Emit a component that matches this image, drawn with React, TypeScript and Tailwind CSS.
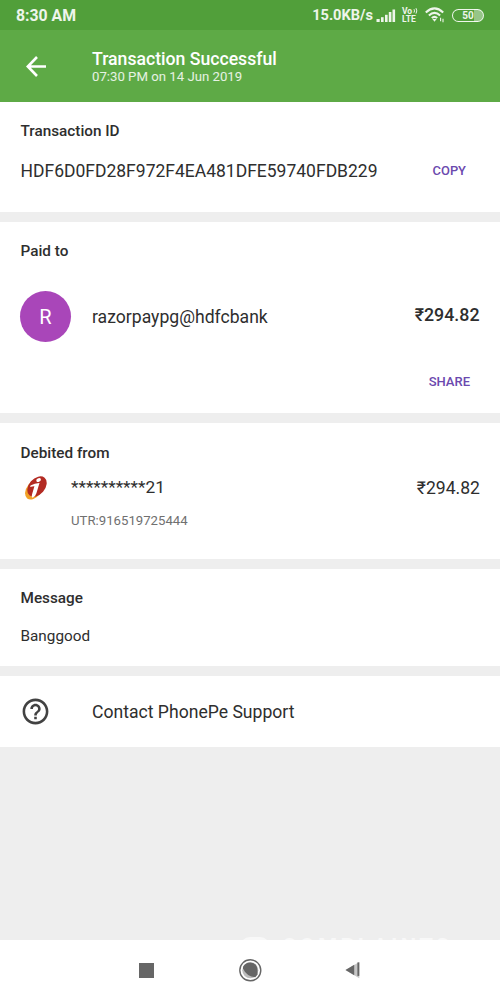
import type { ReactNode } from "react";

const SignalIcon = () => (
  <svg width="20" height="15" viewBox="0 0 20 15" fill="currentColor">
    <rect x="0.5" y="11" width="3.2" height="3" />
    <rect x="5" y="9.2" width="2.6" height="4.8" />
    <rect x="9" y="6.8" width="2.6" height="7.2" />
    <rect x="12.8" y="4" width="2.6" height="10" />
    <rect x="16.5" y="1.5" width="2.6" height="12.5" />
  </svg>
);

const VolteIcon = () => (
  <div className="relative flex w-4 flex-col text-[8.5px] leading-[8px] font-bold">
    <span>Vo</span>
    <span>LTE</span>
    <svg
      className="absolute top-0 left-[11px]"
      width="6"
      height="8"
      viewBox="0 0 6 8"
      fill="none"
      stroke="currentColor"
    >
      <path d="M1 2.2q1 1.6 0 3.4M3 1.2q1.6 2.6 0 5.4" />
    </svg>
  </div>
);

const WifiIcon = () => (
  <svg width="20" height="16" viewBox="0 0 20 16" fill="none" stroke="currentColor">
    <path d="M0.8 5.4Q9.5 -2.6 18.2 5.4" strokeWidth="2.1" />
    <path d="M3.9 8.4Q9.5 3.2 15.1 8.4" strokeWidth="2.1" />
    <path d="M6.8 11.1Q9.5 8.6 12.2 11.1" strokeWidth="2" />
    <path d="M7.4 12h4.2L9.5 14.8z" fill="currentColor" stroke="none" />
    <path d="M15.6 10.8v3.4M18 11.8v3.4" strokeWidth="1.1" />
  </svg>
);

const BankLogo = () => (
  <svg width="24" height="26" viewBox="0 0 24 26">
    <ellipse cx="10.3" cy="14.3" rx="11.6" ry="7.4" transform="rotate(-52 10.3 14.3)" fill="#f2a127" />
    <ellipse cx="13" cy="11.6" rx="11.6" ry="8" transform="rotate(-49 13 11.6)" fill="#b32b23" />
    <ellipse cx="14.6" cy="5" rx="2.5" ry="1.8" transform="rotate(-30 14.6 5)" fill="#fff" />
    <path d="M6.5 10.6Q11 8 15.5 8.1L12.4 18.3Q11.6 21.5 8.6 22.8Q7.2 22 8 19.4L10.4 11.2Q9 11 6.2 12Z" fill="#fff" />
  </svg>
);

const HelpIcon = () => (
  <svg width="31" height="31" viewBox="0 0 24 24" fill="#424242">
    <path d="M11 18h2v-2h-2v2zm1-16C6.48 2 2 6.48 2 12s4.48 10 10 10 10-4.48 10-10S17.52 2 12 2zm0 18c-4.41 0-8-3.59-8-8s3.59-8 8-8 8 3.59 8 8-3.59 8-8 8zm0-14c-2.21 0-4 1.79-4 4h2c0-1.1.9-2 2-2s2 .9 2 2c0 2-3 1.75-3 5h2c0-2.25 3-2.5 3-5 0-2.21-1.79-4-4-4z" />
  </svg>
);

const Section = ({ title, className, children }: { title: string; className: string; children: ReactNode }) => (
  <section className={`bg-white px-5 ${className}`}>
    <h2 className="pl-[0.5px] text-[15.3px] leading-5 font-medium">{title}</h2>
    {children}
  </section>
);

const StatusBar = () => (
  <div className="flex h-[30px] items-center bg-[#519f3a] px-4 pt-px text-white/90">
    <span className="text-[15.8px] font-bold">8:30 AM</span>
    <div className="ml-auto flex items-center">
      <span className="text-[14.6px] font-bold">15.0KB/s</span>
      <div className="ml-[3px]">
        <SignalIcon />
      </div>
      <div className="ml-[6px]">
        <VolteIcon />
      </div>
      <div className="ml-[7px]">
        <WifiIcon />
      </div>
      <div className="ml-[7px] flex h-[13px] w-8 items-center justify-center rounded-full border-[1.5px] border-white/90 bg-linear-to-r from-transparent from-70% to-white/40 to-70% text-[10px] font-bold">
        50
      </div>
    </div>
  </div>
);

const NavBar = () => (
  <nav className="relative flex h-[60px] items-center bg-white text-[#666]">
    <div className="absolute -top-1 left-[240px] flex items-center gap-3 text-[22px] leading-[22px] font-bold text-white/60">
      <div className="h-5 w-[30px] rounded-full border-4 border-white/60" />
      <span className="tracking-[3.2px]">COMPLAINTS</span>
    </div>
    <div className="ml-[139px] size-[15px] bg-[#666]" />
    <svg className="ml-[84px]" width="25" height="25" viewBox="0 0 25 25">
      <circle cx="12.3" cy="12.3" r="10.5" fill="none" stroke="currentColor" strokeWidth="1.4" />
      <circle cx="12.3" cy="12.3" r="8" fill="#bdbdbd" />
      <path d="M5 8.6Q8 4.4 12.4 4.6Q19.2 5.2 19.5 12.3V16.5L17.3 19.3Q8.5 18.5 5 10.5Z" fill="currentColor" />
    </svg>
    <svg className="ml-[82px]" width="16" height="18" viewBox="0 0 16 18">
      <path d="M0.5 9L14.3 1V17.2Z" fill="#c6c6c6" />
      <path d="M0.5 9L9.2 3.8V14.2Z" fill="currentColor" />
      <path d="M12.4 1.4h1.9v13.5h-1.9z" fill="currentColor" />
    </svg>
  </nav>
);

export default function App() {
  return (
    <div className="flex h-[1000px] w-[500px] flex-col overflow-hidden bg-[#eee] font-[Roboto,sans-serif] text-[#2e2e2e]">
      <StatusBar />

      <header className="flex h-[72px] items-center bg-[#5eaa46] pl-[26px] text-white">
        <svg width="21" height="21" viewBox="0 0 21 21" fill="none" stroke="currentColor" strokeWidth="2.6">
          <path d="M20 10.5H2M11 1L1.8 10.5L11 20" />
        </svg>
        <div className="mt-[2px] ml-[45px]">
          <h1 className="text-[17.65px] leading-[19px] font-medium">Transaction Successful</h1>
          <p className="text-[13.2px] leading-[15px] text-white/85">07:30 PM on 14 Jun 2019</p>
        </div>
      </header>

      <main className="flex flex-1 flex-col gap-[10px]">
        <Section title="Transaction ID" className="h-[110px] pt-[19px]">
          <div className="mt-[18px] flex items-center justify-between">
            <span className="pl-[0.5px] text-[17.5px] leading-6">HDF6D0FD28F972F4EA481DFE59740FDB229</span>
            <button className="mr-[14px] text-[12.9px] font-medium text-[#6b49ae]">COPY</button>
          </div>
        </Section>

        <Section title="Paid to" className="h-[191px] pt-[19px]">
          <div className="mt-[30px] flex items-center">
            <div className="flex size-[51px] items-center justify-center rounded-full bg-[#a946b9] text-xl text-white">
              R
            </div>
            <span className="mt-px ml-[21px] text-[17.6px]">razorpaypg@hdfcbank</span>
            <span className="ml-auto -mt-[2px] pr-[0.5px] text-[17.8px] font-medium">₹294.82</span>
          </div>
          <div className="mt-[30px] flex justify-end pr-[10px]">
            <button className="text-[13px] leading-5 font-medium text-[#6b49ae]">SHARE</button>
          </div>
        </Section>

        <Section title="Debited from" className="h-[136px] pt-5">
          <div className="mt-[11px] flex items-center pl-1">
            <BankLogo />
            <span className="mt-px ml-[23px] text-[17.3px]">**********21</span>
            <span className="mt-px ml-auto text-[17.6px]">₹294.82</span>
          </div>
          <p className="mt-[10px] ml-[51px] text-[13.2px] leading-5 text-[#707070]">UTR:916519725444</p>
        </Section>

        <Section title="Message" className="h-[97px] pt-[19px]">
          <p className="mt-[18px] pl-[0.5px] text-[15.3px] leading-5">Banggood</p>
        </Section>

        <section className="flex h-[71px] items-center bg-white pl-5 text-[17.6px]">
          <HelpIcon />
          <span className="mt-px ml-[41px]">Contact PhonePe Support</span>
        </section>
      </main>

      <NavBar />
    </div>
  );
}
